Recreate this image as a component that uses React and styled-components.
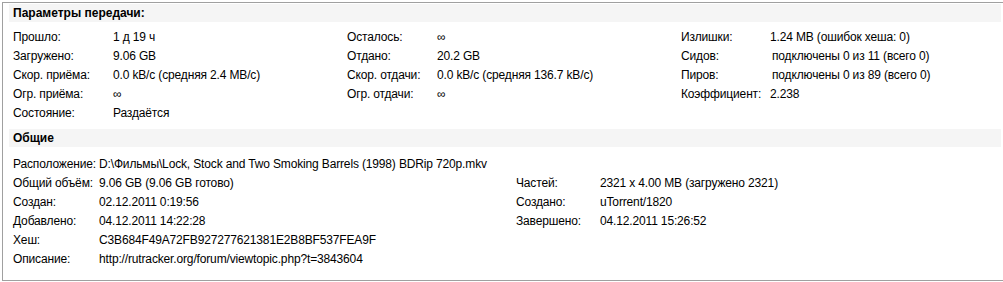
import React from "react"
import styled, { createGlobalStyle } from "styled-components"

const GlobalStyle = createGlobalStyle`
  html, body {
    margin: 0;
    padding: 0;
    background: #ffffff;
  }
  body {
    font-family: "Liberation Sans", Arial, sans-serif;
    font-size: 12px;
    letter-spacing: -0.15px;
    color: #000000;
  }
`

const Frame = styled.div`
  margin: 2px 0 0 2px;
  height: 279px;
  border-top: 1px solid #a0a0a0;
  border-left: 1px solid #a0a0a0;
  border-bottom: 1px solid #a0a0a0;
  padding: 1px 2px 0 6px;
  box-sizing: border-box;
`

const SectionTitle = styled.div`
  height: 18px;
  line-height: 18px;
  background: #f5f5f5;
  padding-left: 4px;
  font-weight: bold;
  letter-spacing: 0;
  margin-top: ${(p) => p.$top || 0}px;
`

const Columns = styled.div`
  display: grid;
  grid-template-columns: ${(p) => p.$cols};
  padding-left: 4px;
  margin-top: ${(p) => p.$top || 0}px;
`

const Column = styled.div`
  display: flex;
  flex-direction: column;
`

const Row = styled.div`
  display: flex;
  height: 19px;
  line-height: 19px;
  white-space: nowrap;
`

const Label = styled.span`
  flex: 0 0 ${(p) => p.$w}px;
`

const Value = styled.span`
  margin-left: ${(p) => p.$shift || 0}px;
`

const transfer = [
  {
    w: 100,
    rows: [
      ["Прошло:", "1 д 19 ч"],
      ["Загружено:", "9.06 GB"],
      ["Скор. приёма:", "0.0 kB/c (средняя 2.4 MB/c)"],
      ["Огр. приёма:", "∞"],
      ["Состояние:", "Раздаётся"],
    ],
  },
  {
    w: 90,
    rows: [
      ["Осталось:", "∞"],
      ["Отдано:", "20.2 GB"],
      ["Скор. отдачи:", "0.0 kB/c (средняя 136.7 kB/c)"],
      ["Огр. отдачи:", "∞"],
    ],
  },
  {
    w: 89,
    rows: [
      ["Излишки:", "1.24 MB (ошибок хеша: 0)"],
      ["Сидов:", "подключены 0 из 11 (всего 0)", 2],
      ["Пиров:", "подключены 0 из 89 (всего 0)", 2],
      ["Коэффициент:", "2.238"],
    ],
  },
]

const generalLeft = [
  ["Общий объём:", "9.06 GB (9.06 GB готово)"],
  ["Создан:", "02.12.2011 0:19:56"],
  ["Добавлено:", "04.12.2011 14:22:28"],
  ["Хеш:", "C3B684F49A72FB927277621381E2B8BF537FEA9F"],
  ["Описание:", "http://rutracker.org/forum/viewtopic.php?t=3843604"],
]

const generalRight = [
  ["Частей:", "2321 x 4.00 MB (загружено 2321)"],
  ["Создано:", "uTorrent/1820"],
  ["Завершено:", "04.12.2011 15:26:52"],
]

const App = () => {
  return (
    <>
      <GlobalStyle />
      <Frame>
        <SectionTitle>Параметры передачи:</SectionTitle>
        <Columns $cols="334px 334px 1fr" $top={6}>
          {transfer.map((col, i) => (
            <Column key={i}>
              {col.rows.map(([l, v, s]) => (
                <Row key={l}>
                  <Label $w={col.w}>{l}</Label>
                  <Value $shift={s}>{v}</Value>
                </Row>
              ))}
            </Column>
          ))}
        </Columns>
        <SectionTitle $top={6}>Общие</SectionTitle>
        <Columns $cols="1fr" $top={8}>
          <Row>
            <Label $w={86}>Расположение:</Label>
            <Value>D:\Фильмы\Lock, Stock and Two Smoking Barrels (1998) BDRip 720p.mkv</Value>
          </Row>
        </Columns>
        <Columns $cols="503px 1fr">
          <Column>
            {generalLeft.map(([l, v]) => (
              <Row key={l}>
                <Label $w={86}>{l}</Label>
                <Value>{v}</Value>
              </Row>
            ))}
          </Column>
          <Column>
            {generalRight.map(([l, v]) => (
              <Row key={l}>
                <Label $w={84}>{l}</Label>
                <Value>{v}</Value>
              </Row>
            ))}
          </Column>
        </Columns>
      </Frame>
    </>
  )
}

export default App
